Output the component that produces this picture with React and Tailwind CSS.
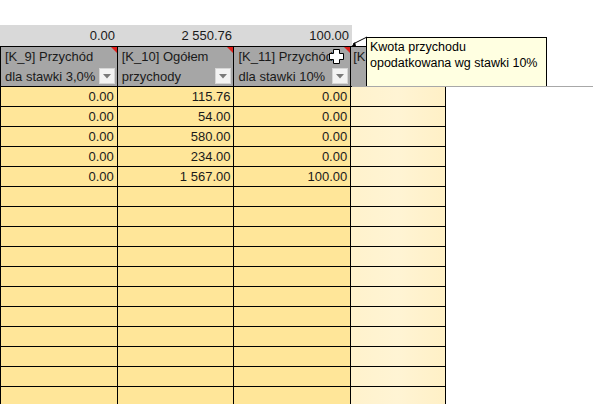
import React from 'react';

const sums = ['0.00', '2 550.76', '100.00'];

const headers = [
  { top: '[K_9] Przychód', bottom: 'dla stawki 3,0%', w: 'w-[118px] border-l' },
  { top: '[K_10] Ogółem', bottom: 'przychody', w: 'w-[117px]' },
  { top: '[K_11] Przychód', bottom: 'dla stawki 10%', w: 'w-[117px]' },
];

const rows = [
  ['0.00', '115.76', '0.00'],
  ['0.00', '54.00', '0.00'],
  ['0.00', '580.00', '0.00'],
  ['0.00', '234.00', '0.00'],
  ['0.00', '1 567.00', '100.00'],
  ...Array.from({ length: 11 }, () => ['', '', '']),
];

const colW = ['w-[118px] border-l', 'w-[117px]', 'w-[117px]'];

const FilterButton = () => (
  <div className="absolute right-[2px] bottom-[2px] w-[16px] h-[16px] bg-[#f3f3f3] border border-[#d6d6d6] flex items-center justify-center">
    <svg width="8" height="5" viewBox="0 0 8 5">
      <path d="M0 0 L8 0 L4 4.5 Z" fill="#7a7a7a" />
    </svg>
  </div>
);

const CommentMark = () => (
  <svg className="absolute right-0 top-0" width="6" height="6" viewBox="0 0 6 6">
    <path d="M0 0 L6 0 L6 6 Z" fill="#e0201b" />
  </svg>
);

export default function App() {
  return (
    <div
      className="relative w-[593px] h-[404px] overflow-hidden bg-white text-[13px] text-[#1a1a1a]"
      style={{ fontFamily: '"Liberation Sans", Arial, sans-serif' }}
    >
      <div className="h-[25px]" />

      {/* sum row */}
      <div className="flex h-[21px] w-[352px] bg-[#d9d9d9]">
        {sums.map((s, i) => (
          <div key={i} className={`${i === 0 ? 'w-[118px]' : 'w-[117px]'} h-full flex items-center justify-end pr-[3px] leading-none`}>
            {s}
          </div>
        ))}
      </div>

      {/* header row */}
      <div className="flex h-[41px] border-y border-black w-[446px] box-border">
        {headers.map((h, i) => (
          <div key={i} className={`${h.w} relative h-full border-r border-black bg-[#a6a6a6] pl-[4px] leading-[20px] overflow-hidden whitespace-nowrap`}>
            <div>{h.top}</div>
            <div>{h.bottom}</div>
            <CommentMark />
            <FilterButton />
          </div>
        ))}
        <div className="w-[95px] h-full border-r border-black bg-[#a6a6a6] pl-[2px] leading-[20px] overflow-hidden whitespace-nowrap">
          [K
        </div>
      </div>

      {/* data rows */}
      {rows.map((r, ri) => (
        <div key={ri} className="flex h-[20px] w-[446px]">
          {r.map((v, ci) => (
            <div key={ci} className={`${colW[ci]} h-full border-r border-b border-black bg-[#ffe699] flex items-center justify-end pr-[3px] leading-none`}>
              {v}
            </div>
          ))}
          <div className="w-[95px] h-full border-r border-b border-black bg-gradient-to-r from-[#fff2cc] via-[#fff4d4] to-[#fff0c6]" />
        </div>
      ))}

      {/* gray separator under comment */}
      <div className="absolute left-[352px] top-[86px] w-[241px] h-[1px] bg-[#a8a8a8]" />

      {/* comment tooltip */}
      <div className="absolute left-[366px] top-[37px] w-[181px] h-[49px] bg-[#ffffe1] border-x border-t border-black pl-[3px] pt-[1px] leading-[16px] text-[12.5px] text-black whitespace-nowrap">
        <div>Kwota przychodu</div>
        <div>opodatkowana wg stawki 10%</div>
      </div>

      {/* comment arrow */}
      <svg className="absolute left-[349px] top-[34px]" width="20" height="16" viewBox="0 0 20 16">
        <line x1="4" y1="10" x2="18" y2="3" stroke="#000" strokeWidth="1" />
        <path d="M2 13 L6 8 L7 12 Z" fill="#000" />
      </svg>

      {/* cell cursor */}
      <svg className="absolute left-[328px] top-[48px]" width="17" height="17" viewBox="0 0 17 17">
        <path
          d="M5.5 1.5 H11.5 V5.5 H15.5 V11.5 H11.5 V15.5 H5.5 V11.5 H1.5 V5.5 H5.5 Z"
          fill="#fff"
          stroke="#000"
          strokeWidth="1"
          strokeLinejoin="round"
        />
      </svg>
    </div>
  );
}
